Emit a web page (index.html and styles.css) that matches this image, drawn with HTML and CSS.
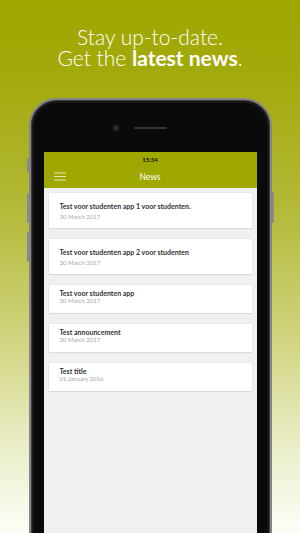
FILE: index.html
```html
<!DOCTYPE html>
<html>
<head>
  <title>News</title>
  <link rel="stylesheet" href="styles.css">
</head>
<body>
  <h1 class="headline">Stay up-to-date.<br>Get the <b>latest news</b>.</h1>

  <div class="phone">
    <span class="side-btn mute"></span>
    <span class="side-btn vol-up"></span>
    <span class="side-btn vol-down"></span>
    <span class="side-btn power"></span>

    <div class="phone-top">
      <span class="camera"></span>
      <span class="speaker"></span>
      <span></span>
    </div>

    <div class="screen">
      <div class="appbar">
        <div class="statusbar">15:34</div>
        <div class="navbar">
          <svg class="menu" width="12" height="9" viewBox="0 0 12 9">
            <path d="M0 1h12M0 4.5h12M0 8h12" stroke="#e4e8b0" stroke-width="1"/>
          </svg>
          <span class="navtitle">News</span>
        </div>
      </div>

      <div class="list">
        <div class="card tall">
          <p class="title">Test voor studenten app 1 voor studenten.</p>
          <p class="date">30 March 2017</p>
        </div>
        <div class="card tall">
          <p class="title">Test voor studenten app 2 voor studenten</p>
          <p class="date">30 March 2017</p>
        </div>
        <div class="card">
          <p class="title">Test voor studenten app</p>
          <p class="date">30 March 2017</p>
        </div>
        <div class="card">
          <p class="title">Test announcement</p>
          <p class="date">30 March 2017</p>
        </div>
        <div class="card">
          <p class="title">Test title</p>
          <p class="date">01 January 2016</p>
        </div>
      </div>
    </div>
  </div>
</body>
</html>
```

FILE: styles.css
```css
html {
  height: 100%;
}

body {
  margin: 0;
  height: 533px;
  overflow: hidden;
  display: flex;
  flex-direction: column;
  align-items: center;
  font-family: Lato, "Open Sans", sans-serif;
  background: linear-gradient(#9fa700 0%, #a3aa0c 15%, #b4ba3a 40%, #d2d684 65%, #ecefcc 85%, #fdfdf8 100%);
}

.headline {
  margin: 26px 0 0;
  font-size: 21px;
  line-height: 21px;
  font-weight: 300;
  color: #fff;
  text-align: center;
}

.headline b {
  font-weight: 700;
}

.phone {
  position: relative;
  margin-top: 30px;
  width: 243px;
  height: 480px;
  flex: none;
  box-sizing: border-box;
  padding: 0 13px;
  border: 2px solid #85858a;
  border-radius: 28px;
  background: #0a0a0a;
  box-shadow: inset 0 0 0 1px #3c3c3e, inset 0 0 0 3px #161616;
  display: flex;
  flex-direction: column;
}

.side-btn {
  position: absolute;
  width: 2px;
  background: #8a8a8e;
  border-radius: 1px;
}

.mute { left: -4px; top: 58px; height: 14px; }
.vol-up { left: -4px; top: 93px; height: 30px; }
.vol-down { left: -4px; top: 132px; height: 30px; }
.power { right: -4px; top: 92px; height: 31px; }

.phone-top {
  height: 52px;
  flex: none;
  display: grid;
  grid-template-columns: 1fr auto 1fr;
  align-items: center;
}

.camera {
  justify-self: end;
  margin-right: 16px;
  margin-top: 4px;
  width: 4px;
  height: 4px;
  border-radius: 50%;
  background: #1c2a44;
  box-shadow: 0 0 0 1px #2a2a2a;
}

.speaker {
  margin-top: 4px;
  width: 33px;
  height: 2px;
  border-radius: 1px;
  background: #353535;
}

.screen {
  flex: 1;
  background: #f0f0f0;
  display: flex;
  flex-direction: column;
}

.appbar {
  background: #9ea800;
}

.statusbar {
  height: 13px;
  line-height: 16px;
  text-align: center;
  font-size: 6px;
  font-weight: 700;
  color: #111;
}

.navbar {
  position: relative;
  height: 23px;
  display: flex;
  align-items: center;
  justify-content: center;
}

.menu {
  position: absolute;
  left: 10px;
  top: 7px;
}

.navtitle {
  font-size: 8.5px;
  color: #fff;
}

.list {
  padding: 5px;
  display: flex;
  flex-direction: column;
  gap: 11px;
}

.card {
  background: #fff;
  padding: 4px 11px 8px;
  box-shadow: 0 0 1px rgba(0, 0, 0, 0.18), 0 1px 1px rgba(0, 0, 0, 0.06);
}

.card.tall {
  padding-top: 9px;
  padding-bottom: 7px;
}

.card p {
  margin: 0;
  line-height: 8px;
}

.card.tall .title {
  margin-bottom: 3px;
}

.title {
  font-size: 7px;
  font-weight: 700;
  color: #333;
}

.date {
  font-size: 6px;
  color: #a6a6a6;
}
```
